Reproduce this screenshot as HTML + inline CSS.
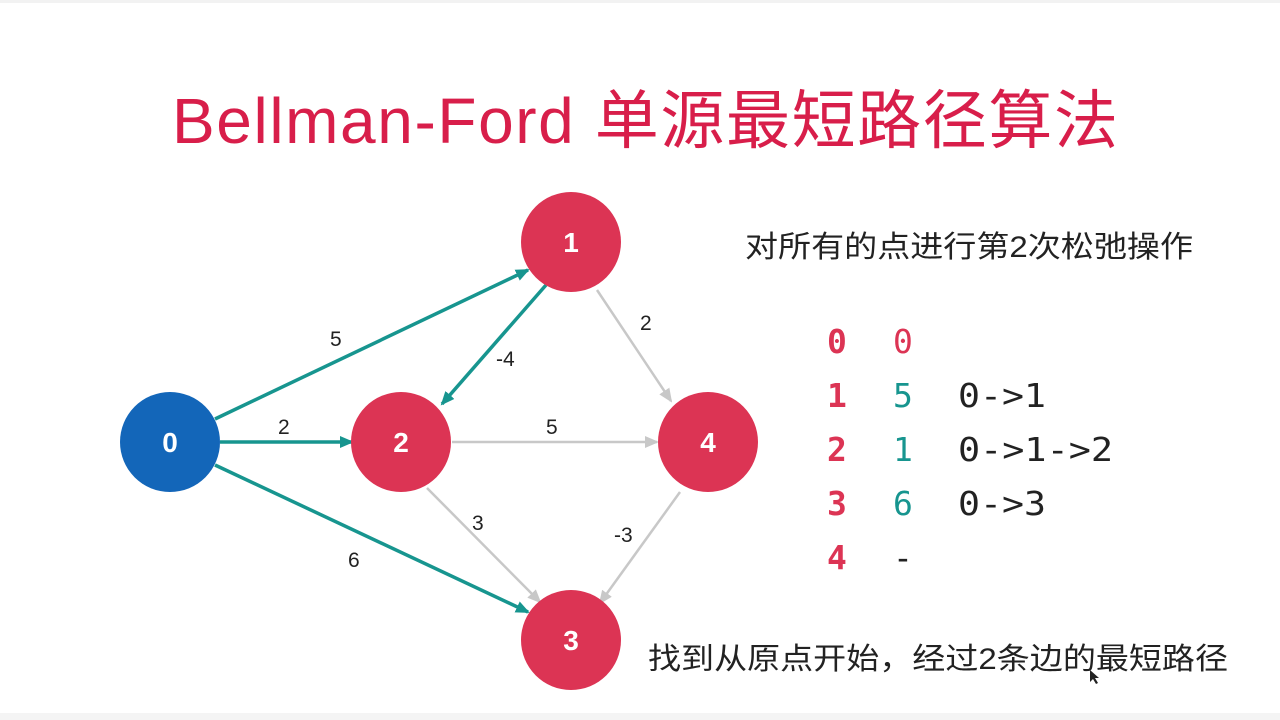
<!DOCTYPE html>
<html><head><meta charset="utf-8"><style>
html,body{margin:0;padding:0;background:#fff;}
svg{display:block}
</style></head><body>
<svg width="1280" height="720" viewBox="0 0 1280 720" xmlns="http://www.w3.org/2000/svg">
<defs>
<marker id="at" markerWidth="14" markerHeight="12" refX="12" refY="6" orient="auto" markerUnits="userSpaceOnUse" viewBox="0 0 14 12"><path d="M0,0 L14,6 L0,12 z" fill="#17958f"/></marker>
<marker id="ag" markerWidth="14" markerHeight="12" refX="12" refY="6" orient="auto" markerUnits="userSpaceOnUse" viewBox="0 0 14 12"><path d="M0,0 L14,6 L0,12 z" fill="#c8c8c8"/></marker>
</defs>
<rect width="1280" height="720" fill="#fff"/>
<rect width="1280" height="3" fill="#f2f2f2"/>
<rect y="713" width="1280" height="7" fill="#f4f4f4"/>
<text x="172" y="143" font-family="Liberation Sans, Noto Sans CJK SC, sans-serif" font-size="64" fill="#d81e4a" textLength="946" lengthAdjust="spacing">Bellman-Ford 单源最短路径算法</text>

<g stroke-width="3.5" fill="none">
<line x1="215" y1="419" x2="528" y2="270" stroke="#17958f" style="marker-end:url(#at)"/>
<line x1="546" y1="285" x2="442" y2="404" stroke="#17958f" style="marker-end:url(#at)"/>
<line x1="220" y1="442" x2="352" y2="442" stroke="#17958f" style="marker-end:url(#at)"/>
<line x1="215" y1="465" x2="528" y2="612" stroke="#17958f" style="marker-end:url(#at)"/>
</g>
<g stroke-width="2.5" fill="none" stroke="#c8c8c8">
<line x1="597" y1="290" x2="671" y2="401" style="marker-end:url(#ag)"/>
<line x1="452" y1="442" x2="657" y2="442" style="marker-end:url(#ag)"/>
<line x1="427" y1="488" x2="540" y2="602" style="marker-end:url(#ag)"/>
<line x1="680" y1="492" x2="600" y2="603" style="marker-end:url(#ag)"/>
</g>

<g font-family="Liberation Sans, sans-serif" font-size="21" fill="#222">
<text x="330" y="346">5</text>
<text x="278" y="434">2</text>
<text x="348" y="567">6</text>
<text x="496" y="366">-4</text>
<text x="640" y="330">2</text>
<text x="546" y="434">5</text>
<text x="472" y="530">3</text>
<text x="614" y="542">-3</text>
</g>

<g font-family="Liberation Sans, sans-serif" font-size="28" font-weight="bold" fill="#fff" text-anchor="middle">
<circle cx="170" cy="442" r="50" fill="#1366b9"/><text x="170" y="452">0</text>
<circle cx="571" cy="242" r="50" fill="#dc3454"/><text x="571" y="252">1</text>
<circle cx="401" cy="442" r="50" fill="#dc3454"/><text x="401" y="452">2</text>
<circle cx="708" cy="442" r="50" fill="#dc3454"/><text x="708" y="452">4</text>
<circle cx="571" cy="640" r="50" fill="#dc3454"/><text x="571" y="650">3</text>
</g>

<text x="745" y="257" font-family="Liberation Sans, Noto Sans CJK SC, sans-serif" font-size="30" fill="#222" textLength="448" lengthAdjust="spacingAndGlyphs">对所有的点进行第2次松弛操作</text>
<text x="648" y="669" font-family="Liberation Sans, Noto Sans CJK SC, sans-serif" font-size="30" fill="#222" textLength="580" lengthAdjust="spacingAndGlyphs">找到从原点开始，经过2条边的最短路径</text>

<g font-family="DejaVu Sans Mono, Liberation Mono, monospace" font-size="33">
<g fill="#dc3454" font-weight="bold">
<text x="827" y="353">0</text><text x="827" y="407">1</text><text x="827" y="461">2</text><text x="827" y="515">3</text><text x="827" y="569">4</text>
</g>
<text x="893" y="353" fill="#dc3454">0</text>
<g fill="#17958f"><text x="893" y="407">5</text><text x="893" y="461">1</text><text x="893" y="515">6</text></g>
<text x="893" y="569" fill="#222">-</text>
<g fill="#222"><text x="958" y="407" textLength="88" lengthAdjust="spacingAndGlyphs">0-&gt;1</text><text x="958" y="461" textLength="155" lengthAdjust="spacingAndGlyphs">0-&gt;1-&gt;2</text><text x="958" y="515" textLength="88" lengthAdjust="spacingAndGlyphs">0-&gt;3</text></g>
</g>
<path d="M1090,670 l0,12 l3,-3 l3,5 l2,-1 l-3,-5 l4,0 z" fill="#222"/>
</svg>
</body></html>
